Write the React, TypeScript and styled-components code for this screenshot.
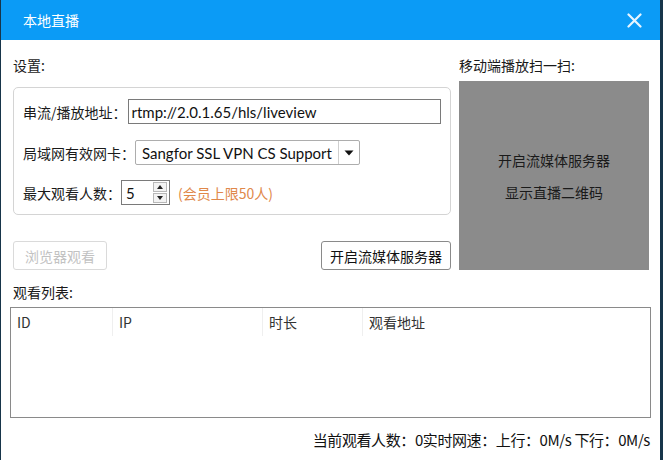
import React from "react";
import styled, { createGlobalStyle } from "styled-components";

const Global = createGlobalStyle`
  html, body { margin: 0; padding: 0; background: #ffffff; }
  body { font-family: "Noto Sans CJK SC", "Noto Sans", sans-serif; color: #1a1a1a; }
  * { box-sizing: border-box; }
`;

const Window = styled.div`
  width: 663px;
  height: 460px;
  display: flex;
  flex-direction: column;
  background: #ffffff;
  border-left: 1px solid #17354a;
  border-right: 3px solid #17354a;
  overflow: hidden;
`;

const TitleBar = styled.div`
  height: 40px;
  flex: none;
  display: flex;
  align-items: center;
  justify-content: space-between;
  background: #0b9bf6;
  padding: 0 16px 0 22px;
`;

const Title = styled.span`
  color: #ffffff;
  font-size: 14px;
  line-height: 20px;
`;

const CloseButton = styled.button`
  width: 20px;
  height: 20px;
  padding: 0;
  border: none;
  background: transparent;
  display: flex;
  align-items: center;
  justify-content: center;
`;

const Top = styled.div`
  display: flex;
  gap: 8px;
  padding: 0 11px 0 12px;
`;

const LeftCol = styled.div`
  width: 438px;
  display: flex;
  flex-direction: column;
`;

const RightCol = styled.div`
  width: 190px;
  display: flex;
  flex-direction: column;
`;

const SectionLabel = styled.div<{ $mt?: number }>`
  margin-top: ${(p) => p.$mt ?? 15}px;
  font-size: 14px;
  line-height: 20px;
  color: #1a1a1a;
`;

const Group = styled.div`
  margin-top: 12px;
  height: 128px;
  border: 1px solid #d4d4d4;
  border-radius: 5px;
  padding: 11px 9px 0 9px;
  display: flex;
  flex-direction: column;
`;

const FormRow = styled.div<{ $mt?: number }>`
  display: flex;
  align-items: center;
  height: 25px;
  margin-top: ${(p) => p.$mt ?? 0}px;
`;

const FieldLabel = styled.span`
  font-size: 14px;
  line-height: 20px;
  white-space: nowrap;
  color: #1a1a1a;
`;

const TextInput = styled.div`
  margin-left: 1px;
  width: 313px;
  height: 25px;
  border: 1px solid #7a7a7a;
  padding-left: 3px;
  display: flex;
  align-items: center;
  font-family: "Lato", "Noto Sans", sans-serif;
  font-size: 15px;
  color: #111;
`;

const Select = styled.div`
  width: 225px;
  height: 25px;
  border: 1px solid #adadad;
  border-radius: 2px;
  display: flex;
  align-items: center;
`;

const SelectValue = styled.span`
  flex: 1;
  padding-left: 6px;
  font-family: "Lato", "Noto Sans", sans-serif;
  font-size: 15px;
  color: #111;
  white-space: nowrap;
  overflow: hidden;
`;

const SelectArrow = styled.span`
  width: 21px;
  height: 23px;
  border-left: 1px solid #cfcfcf;
  display: flex;
  align-items: center;
  justify-content: center;
`;

const Spin = styled.div`
  width: 49px;
  height: 25px;
  border: 1px solid #7a7a7a;
  display: flex;
  align-items: center;
`;

const SpinValue = styled.span`
  flex: 1;
  padding-left: 4px;
  font-family: "Lato", "Noto Sans", sans-serif;
  font-size: 15px;
  color: #111;
`;

const SpinButtons = styled.div`
  width: 14px;
  height: 21px;
  margin-right: 2px;
  display: flex;
  flex-direction: column;
  gap: 1px;
`;

const SpinButton = styled.div`
  flex: 1;
  border: 1px solid #b8b8b8;
  background: #f3f3f3;
  display: flex;
  align-items: center;
  justify-content: center;
`;

const Hint = styled.span`
  margin-left: 8px;
  font-size: 14px;
  color: #e0884a;
  white-space: nowrap;
`;

const ButtonRow = styled.div`
  margin-top: 26px;
  display: flex;
  justify-content: space-between;
`;

const Button = styled.button<{ $disabled?: boolean; $w: number }>`
  width: ${(p) => p.$w}px;
  height: 29px;
  padding: 0;
  border: 1px solid ${(p) => (p.$disabled ? "#dadada" : "#8a8a8a")};
  border-radius: 3px;
  background: #ffffff;
  color: ${(p) => (p.$disabled ? "#c2c2c2" : "#111111")};
  font-family: "Noto Sans CJK SC", sans-serif;
  font-size: 14px;
`;

const QrBox = styled.div`
  margin-top: 6px;
  height: 189px;
  background: #8b8b8b;
  display: flex;
  flex-direction: column;
  align-items: center;
  justify-content: center;
  gap: 12px;
  color: #1a1a1a;
  font-size: 14px;
  line-height: 20px;
`;

const ListSection = styled.div`
  padding: 0 9px 0 9px;
  display: flex;
  flex-direction: column;
`;

const ListLabel = styled(SectionLabel)`
  margin-left: 3px;
`;

const Table = styled.div`
  margin-top: 5px;
  height: 111px;
  border: 1px solid #8a8a8a;
`;

const HeaderRow = styled.div`
  display: flex;
  height: 28px;
`;

const HeaderCell = styled.div<{ $w?: number }>`
  width: ${(p) => (p.$w ? `${p.$w}px` : "auto")};
  flex: ${(p) => (p.$w ? "none" : "1")};
  padding-left: 6px;
  display: flex;
  align-items: center;
  border-right: 1px solid #efefef;
  font-size: 14px;
  color: #333;
  &:last-child { border-right: none; }
`;

const Footer = styled.div`
  margin-top: 12px;
  padding-right: 10px;
  text-align: right;
  font-size: 15px;
  line-height: 20px;
  color: #111;
  letter-spacing: -0.4px;
`;

export default function App() {
  return (
    <>
      <Global />
      <Window>
        <TitleBar>
          <Title>本地直播</Title>
          <CloseButton aria-label="close">
            <svg width="15" height="15" viewBox="0 0 15 15">
              <path d="M1.5 1.5 L13.5 13.5 M13.5 1.5 L1.5 13.5" stroke="#e6f5ff" strokeWidth="2.2" strokeLinecap="round" />
            </svg>
          </CloseButton>
        </TitleBar>
        <Top>
          <LeftCol>
            <SectionLabel>设置:</SectionLabel>
            <Group>
              <FormRow>
                <FieldLabel>串流/播放地址：</FieldLabel>
                <TextInput>rtmp://2.0.1.65/hls/liveview</TextInput>
              </FormRow>
              <FormRow $mt={16}>
                <FieldLabel>局域网有效网卡：</FieldLabel>
                <Select>
                  <SelectValue>Sangfor SSL VPN CS Support</SelectValue>
                  <SelectArrow>
                    <svg width="10" height="6" viewBox="0 0 10 6">
                      <path d="M0.5 0.5 L9.5 0.5 L5 5.5 Z" fill="#111" />
                    </svg>
                  </SelectArrow>
                </Select>
              </FormRow>
              <FormRow $mt={15}>
                <FieldLabel>最大观看人数：</FieldLabel>
                <Spin>
                  <SpinValue>5</SpinValue>
                  <SpinButtons>
                    <SpinButton>
                      <svg width="6" height="4" viewBox="0 0 6 4">
                        <path d="M0 4 L3 0 L6 4 Z" fill="#222" />
                      </svg>
                    </SpinButton>
                    <SpinButton>
                      <svg width="6" height="4" viewBox="0 0 6 4">
                        <path d="M0 0 L6 0 L3 4 Z" fill="#222" />
                      </svg>
                    </SpinButton>
                  </SpinButtons>
                </Spin>
                <Hint>(会员上限50人)</Hint>
              </FormRow>
            </Group>
            <ButtonRow>
              <Button $disabled $w={94}>浏览器观看</Button>
              <Button $w={130}>开启流媒体服务器</Button>
            </ButtonRow>
          </LeftCol>
          <RightCol>
            <SectionLabel>移动端播放扫一扫:</SectionLabel>
            <QrBox>
              <span>开启流媒体服务器</span>
              <span>显示直播二维码</span>
            </QrBox>
          </RightCol>
        </Top>
        <ListSection>
          <ListLabel $mt={12}>观看列表:</ListLabel>
          <Table>
            <HeaderRow>
              <HeaderCell $w={102}>ID</HeaderCell>
              <HeaderCell $w={150}>IP</HeaderCell>
              <HeaderCell $w={100}>时长</HeaderCell>
              <HeaderCell>观看地址</HeaderCell>
            </HeaderRow>
          </Table>
        </ListSection>
        <Footer>当前观看人数：0实时网速：上行：0M/s 下行：0M/s</Footer>
      </Window>
    </>
  );
}
